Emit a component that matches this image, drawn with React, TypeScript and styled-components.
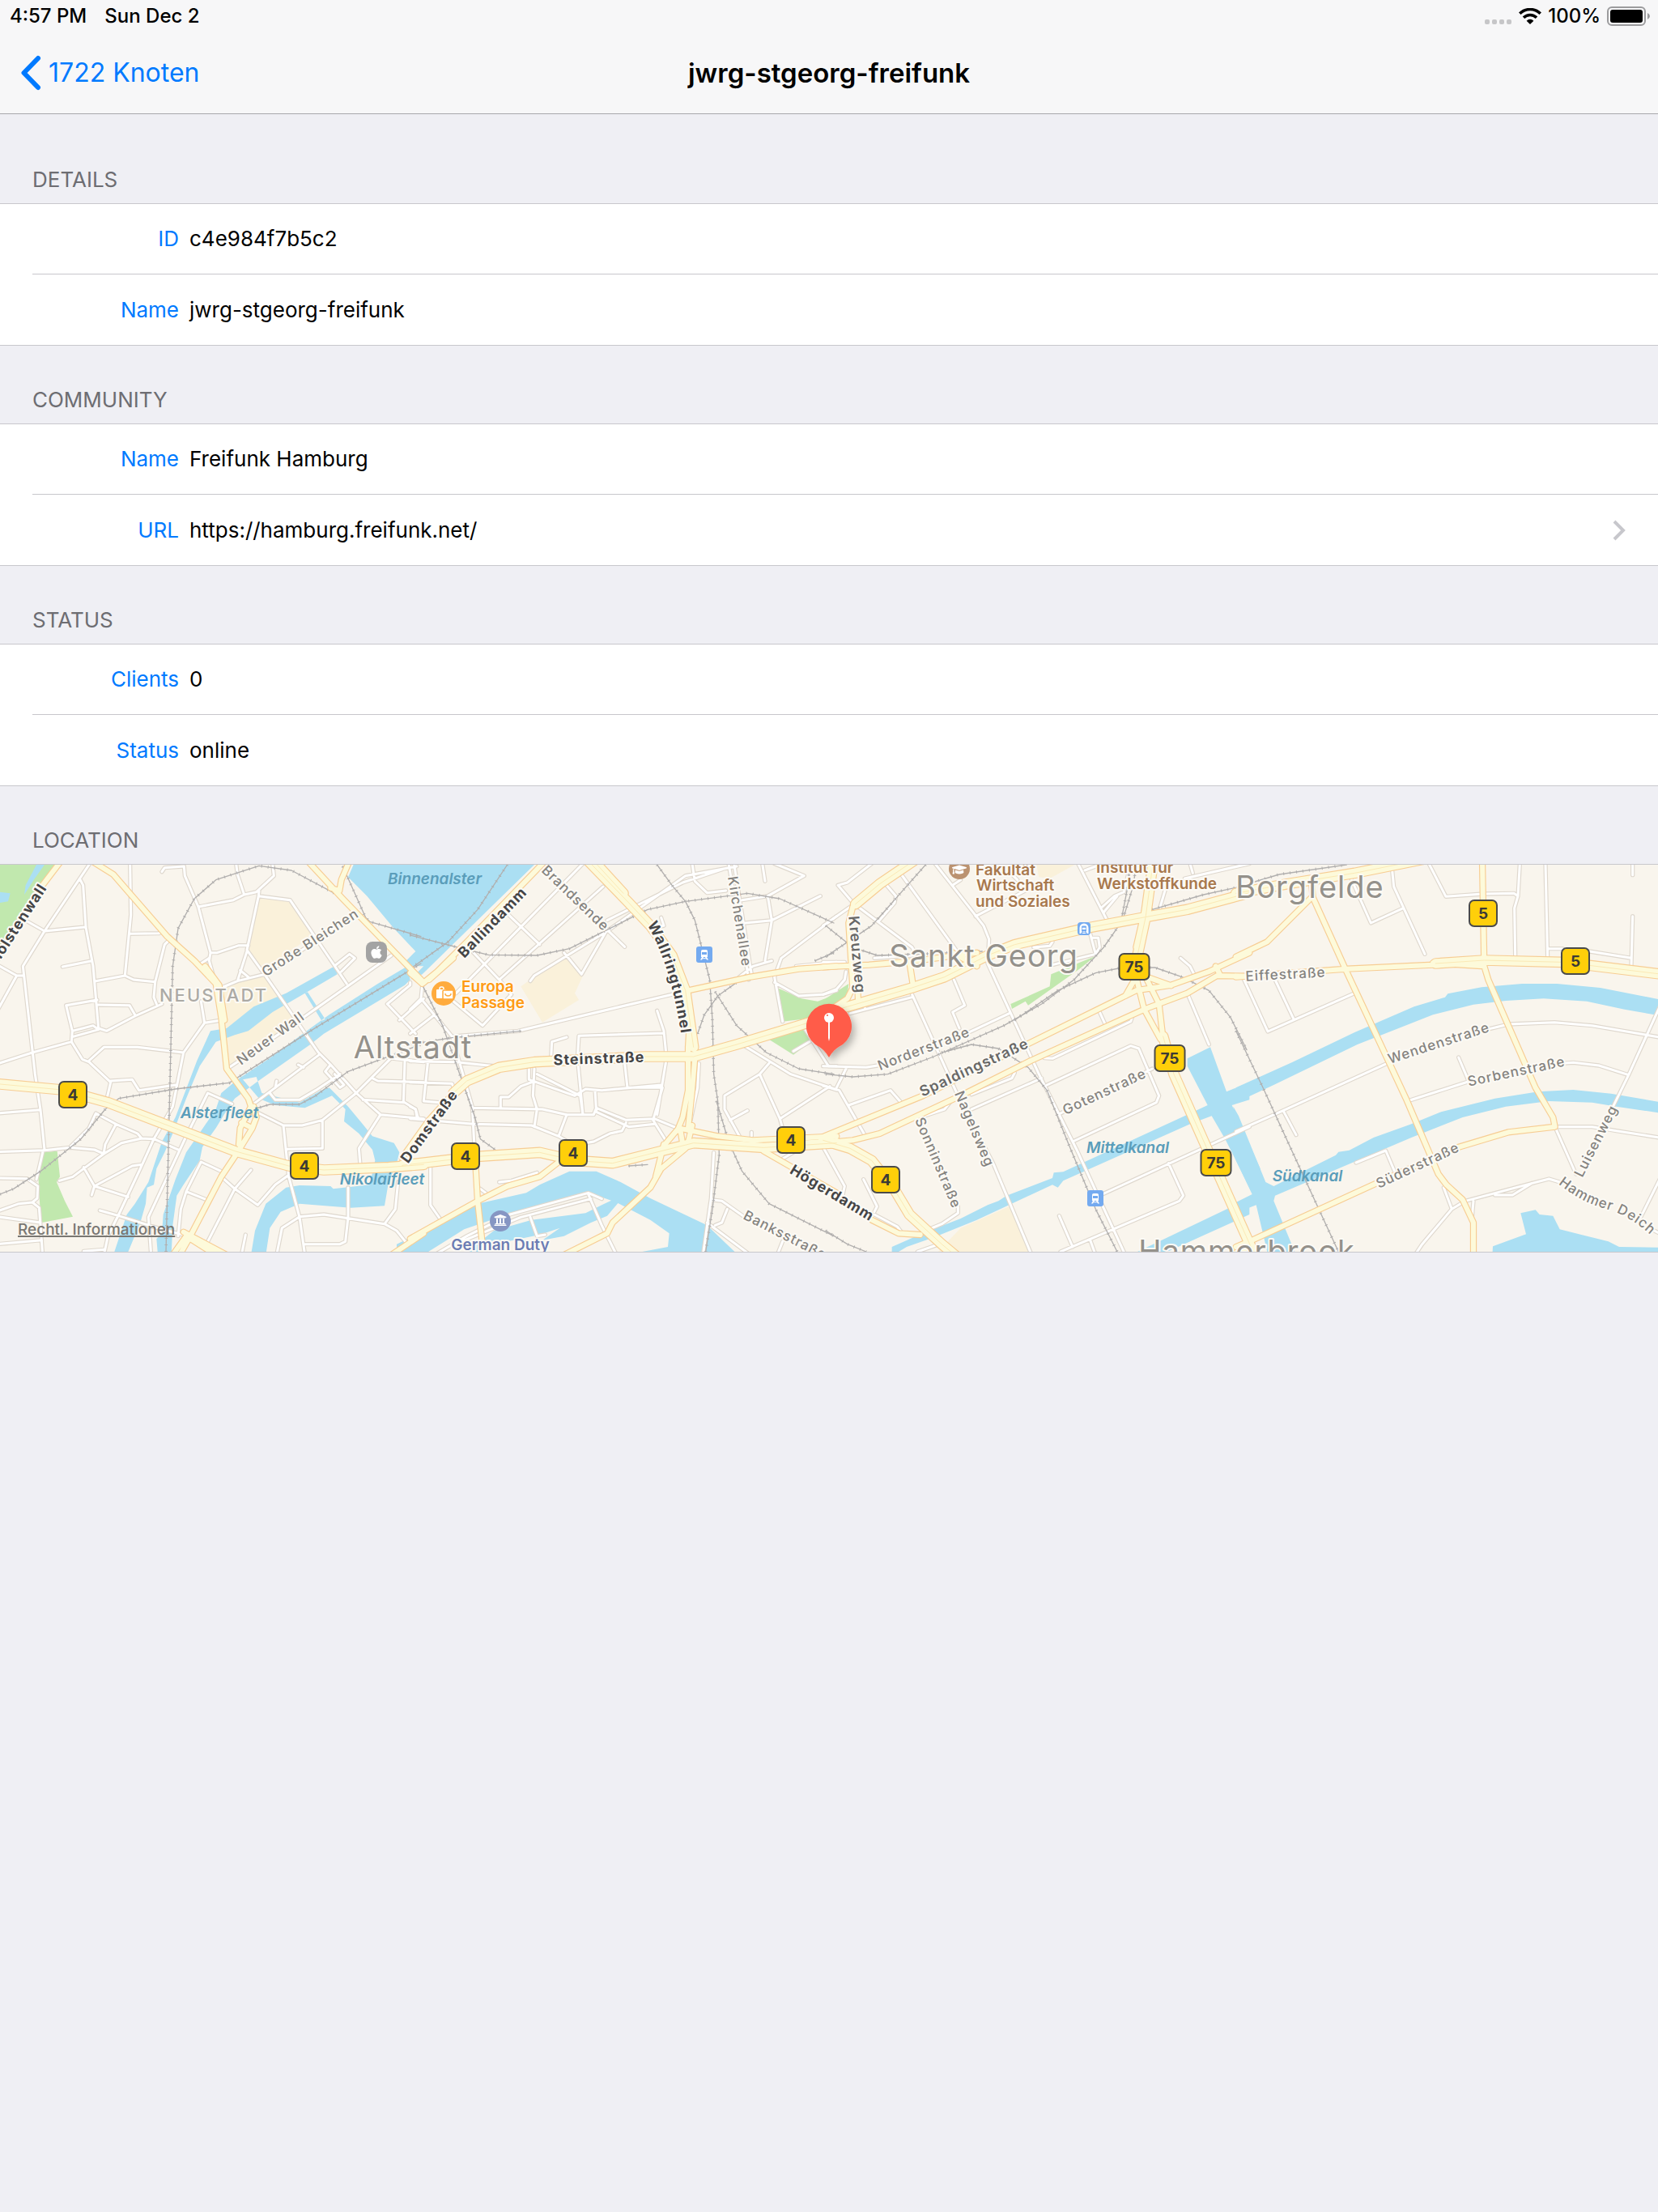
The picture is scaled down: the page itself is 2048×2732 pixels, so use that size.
import React from 'react';
import styled, { createGlobalStyle } from 'styled-components';
import { FaApple, FaGraduationCap, FaUniversity } from 'react-icons/fa';

const GlobalStyle = createGlobalStyle`
  *, *::before, *::after { box-sizing: border-box; }
  html { background: #efeff4; }
  body {
    margin: 0;
    background: #efeff4;
    color: #000;
    font-family: Inter, "Noto Sans", sans-serif;
    font-size: 26px;
    line-height: 32px;
  }
`;

/* ---------- top bars ---------- */

const TopBar = styled.header`
  background: #f7f7f8;
  border-bottom: 1px solid #a8a8ab;
`;

const StatusBar = styled.div`
  display: flex;
  align-items: center;
  justify-content: space-between;
  height: 40px;
  padding: 0 10px 0 12px;
  font-size: 24px;
  font-weight: 500;
`;

const StatusSide = styled.div<{ $gap: number }>`
  display: flex;
  align-items: center;
  gap: ${(p) => p.$gap}px;
`;

const NavBar = styled.nav`
  display: grid;
  grid-template-columns: 1fr auto 1fr;
  align-items: center;
  height: 100px;
  padding: 0 25px;
`;

const BackButton = styled.button`
  display: flex;
  align-items: center;
  gap: 8px;
  justify-self: start;
  padding: 0;
  border: 0;
  background: none;
  color: #007aff;
  font: inherit;
  font-size: 32px;
  line-height: 40px;
  cursor: pointer;
`;

const Title = styled.h1`
  margin: 0;
  font-size: 33px;
  line-height: 40px;
  font-weight: 600;
`;

/* ---------- grouped table ---------- */

const Section = styled.section<{ $first?: boolean }>`
  padding-top: ${(p) => (p.$first ? 65 : 51)}px;
`;

const SectionTitle = styled.h2`
  margin: 0;
  padding: 0 40px 13px;
  font-size: 26px;
  line-height: 32px;
  font-weight: 400;
  color: #6d6d72;
  text-transform: uppercase;
`;

const Group = styled.dl`
  margin: 0;
  background: #fff;
  border-top: 1px solid #c8c7cc;
  border-bottom: 1px solid #c8c7cc;
`;

const Row = styled.div`
  display: flex;
  align-items: center;
  gap: 13px;
  height: 86px;
  margin-left: 40px;
  padding-right: 40px;
  & + & {
    height: 88px;
    border-top: 1px solid #c8c7cc;
  }
`;

const Label = styled.dt`
  width: 181px;
  text-align: right;
  color: #007aff;
`;

const Value = styled.dd`
  flex: 1;
  margin: 0;
`;

const ValueLink = styled.a`
  display: flex;
  align-items: center;
  justify-content: space-between;
  color: inherit;
  text-decoration: none;
`;

/* ---------- map ---------- */

const MapFrame = styled.div`
  position: relative;
  border-top: 1px solid #c8c7cc;
  border-bottom: 1px solid #c8c7cc;
  overflow: hidden;
`;

const MapCanvas = styled.svg`
  display: block;
  width: 100%;
  height: 478px;
  background: #f9f5ed;
`;

const LegalLink = styled.a`
  position: absolute;
  left: 22px;
  bottom: 15px;
  font-size: 19px;
  line-height: 24px;
  font-weight: 500;
  color: #797772;
  text-decoration: underline;
  text-decoration-thickness: 2px;
`;

type Kind = 'street' | 'road' | 'soft' | 'water' | 'place' | 'quarter' | 'shop' | 'school' | 'museum';

const kinds: Record<Kind, { size: number; weight: number; color: string; track: number; italic?: boolean }> = {
  street: { size: 17, weight: 500, color: '#85837f', track: 1 },
  road: { size: 18, weight: 700, color: '#454546', track: 1 },
  soft: { size: 18, weight: 600, color: '#686867', track: 1 },
  water: { size: 19, weight: 600, color: '#5a9dba', track: 0, italic: true },
  place: { size: 38, weight: 400, color: '#94918b', track: 1 },
  quarter: { size: 22, weight: 500, color: '#acaaa5', track: 2 },
  shop: { size: 19, weight: 600, color: '#ff9b14', track: 0 },
  school: { size: 19, weight: 600, color: '#a8784d', track: 0 },
  museum: { size: 19, weight: 600, color: '#6c7db4', track: 0 },
};

const MapText = styled.text<{ $kind: Kind }>`
  font-size: ${(p) => kinds[p.$kind].size}px;
  font-weight: ${(p) => kinds[p.$kind].weight};
  font-style: ${(p) => (kinds[p.$kind].italic ? 'italic' : 'normal')};
  letter-spacing: ${(p) => kinds[p.$kind].track}px;
  fill: ${(p) => kinds[p.$kind].color};
  stroke: ${(p) => (kinds[p.$kind].italic ? 'none' : '#fcfaf5')};
  stroke-width: 4px;
  stroke-linejoin: round;
  paint-order: stroke;
`;

const ShieldText = styled.text`
  font-size: 19px;
  font-weight: 700;
  fill: #3b3a36;
  text-anchor: middle;
`;

interface Tile {
  water: string;
  land?: string;
  green?: string;
  sand?: string;
  minor: string;
  major: string;
  trunk: string;
  rail: string;
}

/* Each tile is 1530 map units wide; three map units make one pixel. */
const tiles: Tile[] = [
  {
    green: `0,24 205,24 170,80 0,380
160,1090 212,1085 222,1180 210,1200 240,1270 270,1328 155,1350 148,1290 142,1180`,
    sand: `960,150 1075,155 1165,280 980,415 915,340
820,475 980,432 1070,560 1110,600 870,760 850,770 830,640 830,570`,
    water: `135,24 165,24 125,80 90,135 95,100
0,125 38,130 30,160 0,165
1310,24 1980,24 1565,430 1520,450 1505,380 1540,345 1460,260 1360,140 1290,70
1510,400 1400,465 1220,580 1150,630 1000,740 880,820 820,870 800,930 745,1010 690,1090 650,1190 605,1320 600,1390 580,1410 585,1470 635,1470 640,1360 655,1250 680,1210 740,1120 750,1070 800,1000 830,950 870,890 950,830 1150,690 1200,650 1400,530 1500,470 1570,400
1240,400 1060,500 940,550 840,630 780,640 730,750 650,960 600,1050 550,1200 500,1280 470,1320 420,1470 470,1470 520,1350 540,1280 545,1220 570,1210 580,1150 610,1090 640,1020 690,890 740,770 800,680 870,655 920,640 1010,570 1130,500 1250,430
1130,500 1140,496 1205,596 1192,602
900,820 950,810 970,870 1110,905 1190,860 1220,850 1290,920 1340,980 1380,1030 1460,1055 1480,1090 1470,1130 1440,1200 1425,1288 1300,1295 1110,1280 1040,1310 1000,1370 985,1470 930,1470 945,1380 985,1280 1060,1220 1110,1212 1225,1215 1235,1225 1370,1210 1390,1120 1380,1080 1330,1020 1275,975 1280,930 1230,880 1130,925 1020,915 960,890`,
    minor: `330,24 165,270 85,400 130,800 150,932 165,1080
-10,395 62,435 85,435
62,435 -10,565
85,225 165,270 315,255
295,75 308,100 318,255 345,400 365,630 395,640 500,585 600,540
482,24 485,210 463,435 355,455
463,435 495,450 575,458 610,320 625,305
575,458 570,515 580,540
482,280 590,278 600,262
232,402 340,380
360,525 245,545 268,640 265,680 305,745 330,755 410,830 395,895
365,543 480,545 500,580
268,640 345,620 365,635
268,662 365,635
-10,762 120,720 265,680
330,750 385,700 510,700 680,720
410,825 490,820 515,860 650,840
745,530 758,610 820,600
758,610 680,720 640,920 570,1040 520,1150 440,1320 400,1400 385,1470
600,50 610,35 682,30 685,65 735,180 780,350 775,380 800,470
735,180 865,155 905,135 950,125 1015,65 1010,20
875,20 880,60 905,135
960,120 958,140 1075,155 1285,465
1245,395 1295,355 1315,370 1265,420
958,140 915,340 980,430 1070,560 1180,720 1225,765 1320,870 1410,950 1570,965
780,350 805,350 885,323 920,323
915,345 880,455
890,415 920,440
820,480 880,455 980,430 1320,210
850,775 1110,600 1450,360
745,390 775,370
-10,945 150,932
-10,1088 165,1082 260,1072 350,1080 385,1095
260,1070 330,1000 355,945 430,985 510,1020 525,1038 570,1040 665,1082
430,985 390,1060 385,1090
220,1195 270,1180 310,1150 385,1095 450,1055 525,1038
310,1145 350,1215 475,1255
340,1248 350,1215 490,1140 525,1135
-10,1185 100,1187 140,1215 138,1260 120,1275 70,1280 -10,1308
120,1275 145,1295 150,1360 158,1470
-10,1328 150,1350
-10,1430 155,1415
160,1082 135,1190
370,1305 440,1325 600,1375 680,1395
310,1456 385,1450
860,910 770,870 690,1030 550,1330 560,1470
820,1160 745,1125 690,1235 765,1265
690,1235 670,1300 660,1400
930,1155 870,1225 770,1420
820,1180 870,1225 955,1285 1020,1210 1075,1170
910,1395 895,1470
940,910 1180,730
1000,870 1020,895 1110,895 1170,860 1260,800
1025,825 1020,850
1105,765 1125,775
1225,765 1205,790 1260,850 1275,840 1240,800
960,945 1050,990 1120,990 1195,970 1320,870 1450,740
1195,970 1195,1075 1065,1078
1050,990 1070,1180 1110,1330 1130,1470
1410,950 1330,1075 1335,1135
1345,895 1500,905 1540,930 1550,965
1380,815 1400,825 1570,830
1500,755 1495,905
1440,740 1570,755
1290,1220 1290,1330 1280,1420 1260,1430 1130,1430
1110,1328 1200,1320 1425,1355 1470,1380 1510,1430
1475,1200 1465,1300 1425,1355
1110,1328 1045,1370 1025,1470
1520,460 1520,470 1435,540 1540,650
1480,600 1570,520`,
    major: `340,10 420,60 620,290 720,380 800,465 820,590 840,780 920,890 930,920 890,1000 885,1060
760,400 812,470 832,600
230,5 150,110 -10,360
1140,10 1270,150 1570,460
1295,10 1265,80 1258,120
1225,110 1258,120
940,920 950,960 935,1000 880,1090 820,1180 700,1410 660,1480
895,980 935,1000
640,1470 690,1400 800,1470
680,1385 840,1470
1450,1470 1570,1390`,
    trunk: `-10,836 230,858 400,905 870,1085 1070,1140 1200,1155 1440,1145 1570,1135`,
    rail: `615,1458 632,740 640,400 660,260 720,150 800,80 960,28 1080,45 1240,130 1300,180
1270,30 1355,220 1370,235 1560,290
0,1245 50,1225 150,1160 300,1040 390,930 440,890 650,855 850,832 1150,640 1560,390
915,970 940,930 1000,912 1110,912 1170,880 1290,790 1560,690`,
  },
  {
    green: `1350,480 1440,520 1500,530 1580,500 1580,580 1370,605
1310,665 1440,625 1475,680 1410,728`,
    sand: `565,360 630,435 600,500 615,525 480,608 400,475`,
    water: `-60,1430 0,1400 240,1280 420,1240 470,1210 580,1160 680,1160 770,1200 880,1260 1090,1360 1205,1470 -60,1470`,
    land: `30,1475 190,1375 350,1320 650,1238 735,1268 700,1285 640,1315 440,1340 300,1380 180,1475
470,1395 545,1370 480,1415 560,1400 660,1350 720,1325 760,1278 880,1340 950,1390 945,1440 850,1458 850,1475 230,1475 300,1430`,
    minor: `350,205 470,320
215,340 320,450
630,20 160,500
705,105 320,450 365,505 258,620 150,530
435,455 450,435 720,270 1010,65 1200,30
785,328 720,265 625,430 560,350
480,30 720,265
720,230 1000,90 1150,40
35,470 30,520 145,660 220,920 230,1110
-10,560 30,520
-10,650 80,580
150,660 390,640 600,590 980,500
512,740 515,680 570,663
905,565 930,640 940,740 905,950
930,648 615,658 610,740 630,950
785,760 795,850 925,850
-10,752 160,755 300,770
55,760 40,900 100,905
-10,830 145,835 160,870
430,780 430,820 600,880 640,855 700,860 920,840
450,780 445,880 460,930 450,995
325,925 325,885 355,885 400,845 445,828
460,800 620,880 630,950
220,925 480,930 570,950 670,950 680,925 790,970 895,965 980,1000
675,860 680,940 800,995 895,985
-10,965 225,985 440,990 540,1030 590,1060
570,950 540,1030
790,980 775,1010 730,1020 670,1050 640,1055
-10,920 10,930 15,960
925,850 890,970 940,1050
320,1200 365,1195 460,1165
920,220 930,250 890,255
1035,20 1045,85 1090,128 1160,120
1170,20 1245,450
1190,20 1255,430
1295,20 1305,85
1220,155 1315,140 1450,65 1340,20
1315,140 1330,230 1305,380
1230,240 1330,230 1510,140
1570,215 1365,370 1340,440 1370,605
1210,440 1260,400 1330,380
1420,400 1570,385
1340,460 1430,510 1520,505 1570,490
1220,690 1400,800 1570,858
1320,760 1285,800 1360,965 1370,1000
1285,800 1155,880 1155,930 1210,1030
1175,970 1240,935
1545,845 1360,965
1410,715 1470,680
1445,620 1540,770 1570,770
1060,760 1055,850 1025,990
1255,1015 1255,1030
1360,1120 1410,1090
1115,1090 1105,1260 1075,1470
1105,1265 1145,1270 1230,1330 1400,1400
1165,1300 1145,1350 1120,1360
1090,1350 1250,1470
1370,1420 1350,1470
65,1140 65,1285 100,1335
250,1225 270,1240
80,1470 200,1400 360,1320 650,1240 700,1262
180,1420 400,1330 660,1262
650,1245 700,1360 755,1470
435,1330 460,1400 490,1395`,
    major: `-10,425 35,465 90,420 200,310 490,10
60,450 150,370
1020,490 1250,440 1430,410 1570,400
1025,620 1020,700 1020,860 1000,960 980,1010
1045,740 1035,860 1020,1000
150,870 60,970 -40,1110
560,1110 470,1180 350,1215 240,1270 -10,1410
232,1130 240,1270 262,1470
1010,1075 920,1150 880,1220 740,1350 720,1390 560,1470
930,1060 900,1180
985,1000 1130,1030 1260,1045 1570,1030
985,1000 930,1065
990,1000 1000,1060
1035,990 1020,1050
1300,1085 1570,1240`,
    trunk: `640,0 800,165 880,250 960,360 1010,490 1040,700
670,10 780,130
150,870 200,825 320,775 450,755 860,735 1040,735 1200,690 1480,605 1580,575
-40,1138 240,1105 470,1090 600,1120 740,1130 900,1090 1040,1055 1300,1072 1570,1055`,
    rail: `350,24 240,190 130,310 -10,410
-10,285 165,330 280,358 460,360 580,335 750,250 870,190 1010,160 1240,130 1360,150 1560,240
905,24 960,100 1010,160 1045,230 1100,450 1110,600 1115,800 1130,900 1135,1100 1110,1300 1085,1458
1120,495 1200,620 1310,720 1430,780 1560,800
1055,650 1080,580 1130,510 1200,460
-10,690 145,665 400,640
35,470 110,620 230,960 250,1040 305,1080
1125,900 1170,1050 1220,1160 1320,1280 1560,1400
800,1140 870,1135
1490,380 1560,350`,
  },
  {
    green: `685,540 830,475 835,430 1000,362 940,410 750,545 740,530 690,558
0,520 85,465 80,510 0,560`,
    sand: `500,1370 680,1290 760,1475 400,1475
780,20 930,20 830,75 790,70`,
    water: `245,1470 245,1440 370,1385 500,1335 600,1285 640,1270 670,1250 840,1185 845,1165 880,1162 1330,955 1415,915 1340,770 1340,742 1425,700 1485,865 1570,830 1570,895 1505,915 1610,1150 1590,1260 1480,1040 1430,955 1350,985 880,1195 860,1220 840,1210 560,1340 400,1405 300,1440 250,1470
1130,1470 1570,1260 1570,1320 1240,1470`,
    minor: `170,20 80,90 45,100 105,170 -10,250
120,180 320,330 330,350
225,100 260,140 255,165 195,235
280,60 490,350
405,20 585,250 605,300 600,390 790,800 930,1080 1110,1470
470,100 500,80
690,60 710,80
555,215 740,120
935,20 1045,235
960,45 1000,30
1025,180 1070,140 1105,125 1130,20
1030,200 1080,140
1235,195 1260,110
1350,20 1360,55
1330,75 1570,20
320,505 490,880 620,1130 765,1475
90,575 320,515
145,530 145,560
475,450 515,545 470,570 495,630
520,650 680,575
-10,770 150,775 210,765
980,280 1000,355 1015,330 1010,295 985,295
1000,355 840,395
770,330 830,325 840,310
180,370 320,360 350,345
-10,385 70,385
75,420 70,450 40,485 -10,505
75,780 40,850
-10,843 50,860 150,1035
85,915 240,860 275,900
540,875 690,815 700,795
540,930 800,815
365,955 440,930 460,905
820,840 1130,695 1160,705 1235,880 1225,905 915,1050
870,945 1210,780
810,740 840,742 1130,605 1135,590
1015,570 1040,625
1315,370 1350,400 1365,430
1340,500 1420,690
1570,995 1025,1245
1270,1130 1325,1250 1310,1270 870,1458
865,1325 915,1440
980,1415 1000,1470
-10,1070 70,1215 60,1260
140,1190 190,1290 180,1310
340,960 490,1290 490,1315 430,1355 370,1380
180,1320 265,1365 280,1385
340,1458 420,1430`,
    major: `-10,403 160,395 320,382 560,350
310,385 325,480
470,350 560,400
100,180 85,240 100,480 80,520 20,560
118,470 120,530
-10,1032 360,880 1150,490 1280,470 1420,420 1570,350
-10,1055 100,1045 200,1020 500,880 760,750 1180,560 1340,500 1450,435 1570,437
1445,400 1460,430
1110,510 1150,440
1190,440 1280,472
1190,450 1235,540 1250,670
1180,200 1150,330
1150,440 1180,560 1240,670
170,1340 270,1390 350,1395
1500,1470 1570,1440`,
    trunk: `340,0 200,95 110,170
10,568 80,550 320,480 440,440 600,360 700,320 960,260 1200,215 1340,190 1570,128
1215,0 1185,220 1155,360
1250,660 1290,800 1410,1070 1580,1450
-10,1045 90,1075 170,1120 250,1220 310,1320 430,1430 490,1480`,
    rail: `370,24 170,250 0,365
0,250 100,330 190,360 350,355 580,345
0,800 100,810 230,800 400,735 660,620 800,540 920,450 1030,330 1100,230 1140,100 1150,24
1095,230 1120,100 1125,24
700,600 860,490 1000,425 1100,405 1220,405 1320,440 1420,490 1500,590 1560,710
430,720 540,690 640,705 750,775 820,860 900,1060 1000,1300 1080,1458
1210,190 1400,135 1560,100
0,1380 80,1430 150,1458`,
  },
  {
    water: `-10,850 200,755 430,645 650,550 765,515 775,502 900,478 1050,465 1180,465 1340,480 1570,525 1570,585 1430,560 1290,530 1130,520 990,528 870,542 720,580 440,690 130,840 -10,905
-20,920 0,955 100,1200 130,1215 220,1170 360,1100 370,1088 410,1082 500,1035 640,985 750,940 950,890 1110,865 1240,858 1380,872 1570,905 1570,945 1400,920 1310,905 1150,900 990,920 830,960 640,1035 370,1150 135,1250 130,1270 215,1475 110,1475 65,1285 0,1310 -10,1275 50,1245 -10,1120
1045,1315 1100,1303 1115,1320 1165,1325 1190,1375 1370,1420 1410,1440 1560,1442 1570,1475 940,1475 942,1438 1065,1393`,
    minor: `410,60 490,240 610,185
568,35 575,105 690,355
705,20 768,142 905,132 1020,130 1035,140
1042,20 1035,140 1022,185 1025,360
1137,20 1145,370
1145,335 1200,335
1300,345 1455,370
1460,20 1460,62
1460,215 1455,400
20,450 108,642 430,500
135,450 205,598
-10,1012 165,935 550,760
165,935 213,1025
930,632 1000,615 1170,608 1310,620 1570,665
815,738 850,820
625,900 850,828
1200,760 1240,757 1335,768 1445,803
1565,540 1445,803 1385,925
1180,995 1310,995 1400,1010 1570,1037
1172,995 1250,1170
435,1128 545,1083 580,1165
1190,1200 1150,1188 1085,1205 840,1270 790,1300 680,1430 650,1475
760,1220 790,1300
870,1270 865,1330
950,1248 1015,1248 1085,1205
1565,1180 1490,1330
1520,1370 1570,1395
60,130 180,95`,
    major: `-10,365 105,310 270,145
270,90 275,145 400,420 620,890 740,1170 770,1210 830,1265 870,1350 870,1480
903,10 910,400 925,450 1100,850 1165,960 1172,995 1000,1015 800,1075 520,1200 50,1415 -10,1440
720,388 910,400
-10,440 400,410 720,395`,
    trunk: `-10,130 180,95 430,55 680,5
730,390 910,378 1200,385 1570,430`,
    rail: `50,90 150,60 400,24
-10,640 90,850 200,1090 370,1458`,
  },
];

const TILE = 1530;

const toPath = (list: string, close = false) =>
  list.split('\n').map((line) => `M${line}${close ? 'Z' : ''}`).join('');

interface LayerProps {
  part: keyof Tile;
  fill?: string;
  stroke?: string;
  width?: number;
  dash?: string;
}

const Layer = ({ part, fill, stroke, width, dash }: LayerProps) => (
  <g
    fill={fill ?? 'none'}
    stroke={stroke}
    strokeWidth={width}
    strokeDasharray={dash}
    strokeLinejoin="round"
    strokeLinecap={dash ? 'butt' : 'round'}
  >
    {tiles.map((tile, i) => {
      const list = tile[part];
      return list ? <path key={i} transform={`translate(${i * TILE} 0)`} d={toPath(list, Boolean(fill))} /> : null;
    })}
  </g>
);

const BaseMap = () => (
  <svg width="2048" height="478" viewBox="0 24 6144 1434">
    <Layer part="green" fill="#c1e8ae" />
    <Layer part="sand" fill="#faf1da" />
    <Layer part="water" fill="#abdff3" />
    <Layer part="land" fill="#f9f5ed" />
    <Layer part="minor" stroke="#dfd8ce" width={16} />
    <Layer part="minor" stroke="#fff" width={9} />
    <Layer part="rail" stroke="#b1afae" width={4} />
    <Layer part="rail" stroke="#b1afae" width={11} dash="3 21" />
    <Layer part="major" stroke="#f7cd94" width={25} />
    <Layer part="trunk" stroke="#f7cd94" width={41} />
    <Layer part="major" stroke="#fdfada" width={18} />
    <Layer part="trunk" stroke="#fdfada" width={34} />
    <Layer part="trunk" stroke="#fbe9b6" width={3} />
  </svg>
);

interface MapLabel {
  text: string;
  kind: Kind;
  x: number;
  y: number;
  angle?: number;
  anchor?: 'start' | 'middle' | 'end';
}

const labels: MapLabel[] = [
  { text: 'Holstenwall', kind: 'road', x: 53, y: 25, angle: -57, anchor: 'end' },
  { text: 'Binnenalster', kind: 'water', x: 537, y: 17 },
  { text: 'Große Bleichen', kind: 'street', x: 383, y: 96, angle: -33 },
  { text: 'Neuer Wall', kind: 'street', x: 334, y: 214, angle: -36 },
  { text: 'NEUSTADT', kind: 'quarter', x: 264, y: 161 },
  { text: 'Altstadt', kind: 'place', x: 510, y: 225 },
  { text: 'Alsterfleet', kind: 'water', x: 271, y: 306 },
  { text: 'Nikolaifleet', kind: 'water', x: 472, y: 388 },
  { text: 'Domstraße', kind: 'road', x: 530, y: 323, angle: -54 },
  { text: 'Ballindamm', kind: 'road', x: 608, y: 71, angle: -46 },
  { text: 'Brandsende', kind: 'street', x: 711, y: 41, angle: 44 },
  { text: 'Europa', kind: 'shop', x: 570, y: 150, anchor: 'start' },
  { text: 'Passage', kind: 'shop', x: 570, y: 170, anchor: 'start' },
  { text: 'Kirchenallee', kind: 'street', x: 914, y: 70, angle: 81 },
  { text: 'Steinstraße', kind: 'road', x: 740, y: 239, angle: -2 },
  { text: 'Högerdamm', kind: 'road', x: 1028, y: 405, angle: 31 },
  { text: 'Banksstraße', kind: 'street', x: 970, y: 457, angle: 27 },
  { text: 'German Duty', kind: 'museum', x: 618, y: 469 },
  { text: 'Kreuzweg', kind: 'soft', x: 1059, y: 111, angle: 85 },
  { text: 'Sankt Georg', kind: 'place', x: 1215, y: 112 },
  { text: 'Fakultät', kind: 'school', x: 1205, y: 6, anchor: 'start' },
  { text: 'Wirtschaft', kind: 'school', x: 1206, y: 25, anchor: 'start' },
  { text: 'und Soziales', kind: 'school', x: 1205, y: 45, anchor: 'start' },
  { text: 'Institut für', kind: 'school', x: 1354, y: 3, anchor: 'start' },
  { text: 'Werkstoffkunde', kind: 'school', x: 1355, y: 23, anchor: 'start' },
  { text: 'Norderstraße', kind: 'street', x: 1141, y: 227, angle: -21 },
  { text: 'Spaldingstraße', kind: 'soft', x: 1203, y: 250, angle: -25 },
  { text: 'Nagelsweg', kind: 'street', x: 1204, y: 326, angle: 67 },
  { text: 'Sonninstraße', kind: 'street', x: 1159, y: 368, angle: 67 },
  { text: 'Gotenstraße', kind: 'street', x: 1364, y: 280, angle: -25 },
  { text: 'Mittelkanal', kind: 'water', x: 1393, y: 349 },
  { text: 'Borgfelde', kind: 'place', x: 1618, y: 27 },
  { text: 'Hammerbrook', kind: 'place', x: 1540, y: 477 },
  { text: 'Eiffestraße', kind: 'street', x: 1588, y: 135, angle: -3 },
  { text: 'Wendenstraße', kind: 'street', x: 1777, y: 220, angle: -18 },
  { text: 'Sorbenstraße', kind: 'street', x: 1873, y: 255, angle: -12 },
  { text: 'Süderstraße', kind: 'street', x: 1751, y: 371, angle: -25 },
  { text: 'Luisenweg', kind: 'street', x: 1971, y: 341, angle: -63 },
  { text: 'Südkanal', kind: 'water', x: 1615, y: 384 },
];

const Labels = () => (
  <g>
    {labels.map(({ text, kind, x, y, angle = 0, anchor = 'middle' }) => (
      <MapText
        key={text}
        $kind={kind}
        textAnchor={anchor}
        dy="0.36em"
        transform={`translate(${x} ${y}) rotate(${angle})`}
      >
        {text}
      </MapText>
    ))}
    <path id="wallring" d="M797 70 Q 829 122 842 214" fill="none" />
    <MapText $kind="road">
      <textPath href="#wallring" startOffset="50%" textAnchor="middle">Wallringtunnel</textPath>
    </MapText>
    <path id="hammer" d="M1922 392 Q 1952 416 1980 424 Q 2012 432 2042 460" fill="none" />
    <MapText $kind="street">
      <textPath href="#hammer" startOffset="50%" textAnchor="middle">Hammer Deich</textPath>
    </MapText>
  </g>
);

const shields = [
  { n: '4', x: 90, y: 284 },
  { n: '4', x: 376, y: 372 },
  { n: '4', x: 575, y: 360 },
  { n: '4', x: 708, y: 356 },
  { n: '4', x: 977, y: 340 },
  { n: '4', x: 1094, y: 389 },
  { n: '75', x: 1401, y: 126 },
  { n: '75', x: 1445, y: 239 },
  { n: '75', x: 1502, y: 368 },
  { n: '5', x: 1832, y: 60 },
  { n: '5', x: 1946, y: 119 },
];

const Shields = () => (
  <g>
    {shields.map(({ n, x, y }) => {
      const w = n.length > 1 ? 37 : 34;
      return (
        <g key={`${x}-${y}`} transform={`translate(${x} ${y})`}>
          <rect x={-w / 2} y={-16} width={w} height={32} rx={6} fill="#ffcf0a" stroke="#4a4a4a" strokeWidth={2} />
          <ShieldText y={7}>{n}</ShieldText>
        </g>
      );
    })}
  </g>
);

const Train = ({ x, y, tunnel = false }: { x: number; y: number; tunnel?: boolean }) => {
  const half = tunnel ? 8 : 10;
  return (
    <g transform={`translate(${x} ${y})`}>
      <rect x={-half} y={-half} width={half * 2} height={half * 2} rx={tunnel ? 4 : 3} fill="#74aaf0" />
      {tunnel && <path d="M-5.500 6V-1a5.500 5.500 0 0 1 11 0V6z" fill="#fff" />}
      <g fill={tunnel ? '#74aaf0' : '#fff'} transform={tunnel ? 'translate(0 1) scale(.75)' : undefined}>
        <path d="M-4-4.500q0-1.500 2-1.500h4q2 0 2 1.500V3H-4z" />
        <path d="M-3 3h2l-2 3.500h-2zM3 3h-2l2 3.500h2z" />
        <path d="M-2.500 4.200h5v1h-5z" />
        <rect x={-3} y={-3} width={6} height={3} fill={tunnel ? '#fff' : '#74aaf0'} />
      </g>
    </g>
  );
};

const ShoppingBags = () => (
  <g transform="translate(548 159)">
    <circle r={15} fill="#ffab3d" />
    <path d="M-5-4v-2q0-2 2-2h1q2 0 2 2v2" fill="none" stroke="#fff" strokeWidth={1.5} />
    <rect x={-9} y={-5} width={12} height={11} rx={1} fill="#fff" />
    <rect x={-1} y={-4} width={13} height={11} rx={1} fill="#fff" stroke="#ffab3d" strokeWidth={1.5} />
    <path d="M2 0q0 3 3.500 3t3.500-3" fill="none" stroke="#ffab3d" strokeWidth={1.5} />
  </g>
);

const Places = () => (
  <g color="#fff">
    <rect x={452} y={95} width={26} height={26} rx={8} fill="#a3a3a3" />
    <FaApple x={456} y={99} size={18} />
    <ShoppingBags />
    <circle cx={618} cy={440} r={13} fill="#8696c3" />
    <FaUniversity x={610} y={431} size={16} />
    <circle cx={1185} cy={5} r={13} fill="#bb9270" />
    <FaGraduationCap x={1176} y={-3} size={18} />
    <Train x={870} y={111} />
    <Train x={1339} y={79} tunnel />
    <Train x={1353} y={412} />
  </g>
);

const Pin = () => (
  <g>
    <defs>
      <filter id="pin-shadow" x="-50%" y="-50%" width="200%" height="200%">
        <feDropShadow dx="4" dy="5" stdDeviation="5" floodColor="#000" floodOpacity="0.28" />
      </filter>
    </defs>
    <path
      d="M1024 238 C1021 233 1018 229 1012 225 A28 28 0 1 1 1036 225 C1030 229 1027 233 1024 238Z"
      fill="#ff5b48"
      filter="url(#pin-shadow)"
    />
    <path d="M1023 190h2v24l-1 4-1-4z" fill="#fff" />
    <circle cx={1024} cy={189} r={6} fill="#fff" />
    <circle cx={1022} cy={186} r={1} fill="#ff5b48" />
  </g>
);

/* ---------- small icons ---------- */

const SignalDots = () => (
  <svg width="34" height="20" viewBox="0 0 34 20" fill="#c6c6c8">
    {[0, 9, 18, 27].map((x) => <rect key={x} x={x} y="14" width="6" height="6" rx="2" />)}
  </svg>
);

const Wifi = () => (
  <svg width="28" height="20" viewBox="0 0 28 20" fill="none" stroke="#000" strokeWidth="3.6">
    <path d="M1.3 6.8a18 18 0 0 1 25.4 0" />
    <path d="M6 11.8a11.4 11.4 0 0 1 16 0" />
    <path d="M9.6 15.7a6.2 6.2 0 0 1 8.8 0L14 20z" fill="#000" stroke="none" />
  </svg>
);

const Battery = () => (
  <svg width="53" height="24" viewBox="0 0 53 24">
    <rect x="1" y="1" width="46" height="22" rx="5" fill="none" stroke="#9b9b9d" strokeWidth="2" />
    <rect x="4" y="4" width="40" height="16" rx="3" fill="#000" />
    <path d="M50 8q3 1.500 3 4t-3 4z" fill="#9b9b9d" />
  </svg>
);

const BackChevron = () => (
  <svg width="27" height="44" viewBox="0 0 27 44" fill="none" stroke="#007aff" strokeWidth="6" strokeLinecap="round" strokeLinejoin="round">
    <path d="M22 4 4.500 22 22 40" />
  </svg>
);

const Disclosure = () => (
  <svg width="16" height="28" viewBox="0 0 16 28" fill="none" stroke="#c7c7cc" strokeWidth="4">
    <path d="M2 3l11 11L2 25" />
  </svg>
);

/* ---------- screen ---------- */

interface Field {
  label: string;
  value: string;
  href?: string;
}

const sections: { title: string; fields: Field[] }[] = [
  {
    title: 'Details',
    fields: [
      { label: 'ID', value: 'c4e984f7b5c2' },
      { label: 'Name', value: 'jwrg-stgeorg-freifunk' },
    ],
  },
  {
    title: 'Community',
    fields: [
      { label: 'Name', value: 'Freifunk Hamburg' },
      { label: 'URL', value: 'https://hamburg.freifunk.net/', href: 'https://hamburg.freifunk.net/' },
    ],
  },
  {
    title: 'Status',
    fields: [
      { label: 'Clients', value: '0' },
      { label: 'Status', value: 'online' },
    ],
  },
];

export default function App() {
  return (
    <>
      <GlobalStyle />
      <TopBar>
        <StatusBar>
          <StatusSide $gap={22}>
            <span>4:57 PM</span>
            <span>Sun Dec 2</span>
          </StatusSide>
          <StatusSide $gap={8}>
            <SignalDots />
            <Wifi />
            <span>100%</span>
            <Battery />
          </StatusSide>
        </StatusBar>
        <NavBar>
          <BackButton type="button">
            <BackChevron />
            1722 Knoten
          </BackButton>
          <Title>jwrg-stgeorg-freifunk</Title>
        </NavBar>
      </TopBar>
      <main>
        {sections.map((section, i) => (
          <Section key={section.title} $first={i === 0}>
            <SectionTitle>{section.title}</SectionTitle>
            <Group>
              {section.fields.map((field) => (
                <Row key={field.label}>
                  <Label>{field.label}</Label>
                  <Value>
                    {field.href ? (
                      <ValueLink href={field.href}>
                        {field.value}
                        <Disclosure />
                      </ValueLink>
                    ) : (
                      field.value
                    )}
                  </Value>
                </Row>
              ))}
            </Group>
          </Section>
        ))}
        <Section>
          <SectionTitle>Location</SectionTitle>
          <MapFrame>
            <MapCanvas viewBox="0 0 2048 478" preserveAspectRatio="xMidYMid slice" role="img" aria-label="jwrg-stgeorg-freifunk">
              <BaseMap />
              <Labels />
              <Places />
              <Shields />
              <Pin />
            </MapCanvas>
            <LegalLink href="#legal">Rechtl. Informationen</LegalLink>
          </MapFrame>
        </Section>
      </main>
    </>
  );
}
